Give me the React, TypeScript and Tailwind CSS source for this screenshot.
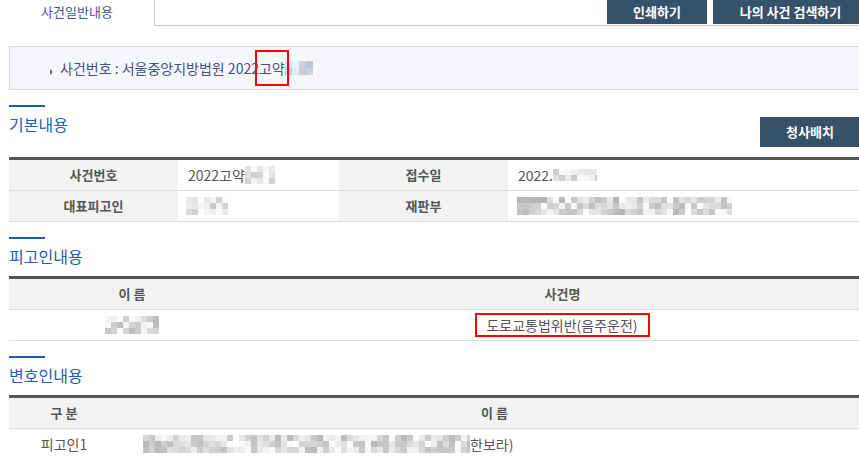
import React from "react";

const FONT = '"Noto Sans CJK KR", "Noto Sans", "Liberation Sans", sans-serif';

function Mosaic({
  w,
  h,
  seed,
  cell = 6,
  tint = false,
  min = 185,
}: {
  w: number;
  h: number;
  seed: number;
  cell?: number;
  tint?: boolean;
  min?: number;
}) {
  const cols = Math.ceil(w / cell);
  const rows = Math.ceil(h / cell);
  let s = seed;
  const rnd = () => {
    s = (s * 9301 + 49297) % 233280;
    return s / 233280;
  };
  const cells: React.ReactNode[] = [];
  for (let r = 0; r < rows; r++) {
    for (let c = 0; c < cols; c++) {
      const v = Math.round(min + rnd() * (255 - min));
      const color = tint
        ? `rgb(${v - 14}, ${v - 8}, ${Math.min(255, v + 4)})`
        : `rgb(${v}, ${v}, ${v})`;
      cells.push(
        <span
          key={`${r}-${c}`}
          style={{ backgroundColor: color, width: cell, height: cell }}
        />
      );
    }
  }
  return (
    <span
      className="inline-grid align-middle overflow-hidden"
      style={{
        width: w,
        height: h,
        gridTemplateColumns: `repeat(${cols}, ${cell}px)`,
      }}
    >
      {cells}
    </span>
  );
}

function SectionTitle({ title }: { title: string }) {
  return (
    <div className="text-[16px] leading-[22px] text-[#1c60b0]">{title}</div>
  );
}

function BlueLine() {
  return <div className="w-[36px] h-[2px] bg-[#1b5faa]" />;
}

export default function App() {
  return (
    <div
      className="w-[859px] h-[458px] overflow-hidden bg-white"
      style={{ fontFamily: FONT }}
    >
      <div className="w-[870px]">
        {/* top tab row */}
        <div className="flex h-[26px]">
          <div className="w-[154px] flex justify-center text-[13px] leading-[24px] text-[#3d5a8a]">
            사건일반내용
          </div>
          <div className="flex-1 border-l border-b border-[#c9c9c9] flex justify-end items-start gap-[6px] pr-[2px]">
            <button className="h-[24px] w-[100px] bg-[#36516a] text-white text-[13px] font-bold leading-[24px]">
              인쇄하기
            </button>
            <button className="h-[24px] w-[155px] bg-[#36516a] text-white text-[13px] font-bold leading-[24px]">
              나의 사건 검색하기
            </button>
          </div>
        </div>

        <div className="ml-[9px] w-[861px]">
          {/* breadcrumb */}
          <div className="mt-[20px] h-[44px] border border-[#d6d9de] bg-[#f6f7fa] flex items-center pl-[40px]">
            <span className="w-0 h-0 border-y-[3px] border-y-transparent border-l-[3px] border-l-[#777] translate-y-[4px] mr-[7px]" />
            <span className="text-[14px] leading-[20px] text-[#3a5583] flex items-center">
              사건번호 : 서울중앙지방법원 2022
              <span className="relative inline-block">
                고약
                <span className="absolute left-[-4px] right-[-4px] top-[-8px] bottom-[-8px] border-2 border-[#ff0000]" />
              </span>
              <Mosaic w={28} h={14} seed={11} cell={7} tint min={200} />
            </span>
          </div>

          {/* 기본내용 */}
          <div className="mt-[15px]">
            <BlueLine />
            <div className="mt-[6px] flex justify-between items-start">
              <SectionTitle title="기본내용" />
              <button className="mt-[4px] mr-[10px] h-[30px] w-[100px] bg-[#36516a] text-white text-[13px] font-bold">
                청사배치
              </button>
            </div>
            <div className="mt-[10px] border-t-[3px] border-[#555555] text-[14px] text-[#555]">
              <div className="grid grid-cols-[169px_161px_169px_1fr] border-b border-[#dcdcdc]">
                <div className="h-[30px] bg-[#f2f2f2] font-bold text-[13px] flex items-center justify-center">
                  사건번호
                </div>
                <div className="h-[30px] flex items-center pl-[10px]">
                  2022고약
                  <Mosaic w={30} h={18} seed={5} cell={6} min={205} />
                </div>
                <div className="h-[30px] bg-[#f2f2f2] font-bold text-[13px] flex items-center justify-center">
                  접수일
                </div>
                <div className="h-[30px] flex items-center pl-[10px]">
                  2022.
                  <Mosaic w={44} h={12} seed={23} cell={6} min={200} />
                </div>
              </div>
              <div className="grid grid-cols-[169px_161px_169px_1fr] border-b border-[#dcdcdc]">
                <div className="h-[30px] bg-[#f2f2f2] font-bold text-[13px] flex items-center justify-center">
                  대표피고인
                </div>
                <div className="h-[30px] flex items-center pl-[8px]">
                  <Mosaic w={42} h={18} seed={37} cell={6} min={180} />
                </div>
                <div className="h-[30px] bg-[#f2f2f2] font-bold text-[13px] flex items-center justify-center">
                  재판부
                </div>
                <div className="h-[30px] flex items-center pl-[9px]">
                  <Mosaic w={215} h={18} seed={71} cell={6} min={180} />
                </div>
              </div>
            </div>
          </div>

          {/* 피고인내용 */}
          <div className="mt-[15px]">
            <BlueLine />
            <div className="mt-[6px]">
              <SectionTitle title="피고인내용" />
            </div>
            <div className="mt-[9px] border-t-[3px] border-[#555555] text-[14px] text-[#555]">
              <div className="grid grid-cols-[246px_1fr] bg-[#f2f2f2] border-b border-[#dcdcdc] font-bold text-[13px]">
                <div className="h-[30px] flex items-center justify-center">이 름</div>
                <div className="h-[30px] flex items-center justify-center">사건명</div>
              </div>
              <div className="grid grid-cols-[246px_1fr] border-b border-[#dcdcdc]">
                <div className="h-[30px] flex items-center justify-center">
                  <Mosaic w={54} h={18} seed={91} cell={6} min={185} />
                </div>
                <div className="h-[30px] flex items-center justify-center">
                  <span className="border-2 border-[#ff0000] pl-[9px] pr-[10px] leading-[20px]">
                    도로교통법위반(음주운전)
                  </span>
                </div>
              </div>
            </div>
          </div>

          {/* 변호인내용 */}
          <div className="mt-[15px]">
            <BlueLine />
            <div className="mt-[6px]">
              <SectionTitle title="변호인내용" />
            </div>
            <div className="mt-[9px] border-t-[3px] border-[#555555] text-[14px] text-[#555]">
              <div className="grid grid-cols-[110px_1fr] bg-[#f2f2f2] border-b border-[#dcdcdc] font-bold text-[13px]">
                <div className="h-[30px] flex items-center justify-center">구 분</div>
                <div className="h-[30px] flex items-center justify-center">이 름</div>
              </div>
              <div className="grid grid-cols-[110px_1fr] border-b border-[#dcdcdc]">
                <div className="h-[30px] flex items-center justify-center">피고인1</div>
                <div className="h-[30px] flex items-center pl-[24px]">
                  <Mosaic w={327} h={18} seed={131} cell={6} min={185} />
                  한보라)
                </div>
              </div>
            </div>
          </div>
        </div>
      </div>
    </div>
  );
}
